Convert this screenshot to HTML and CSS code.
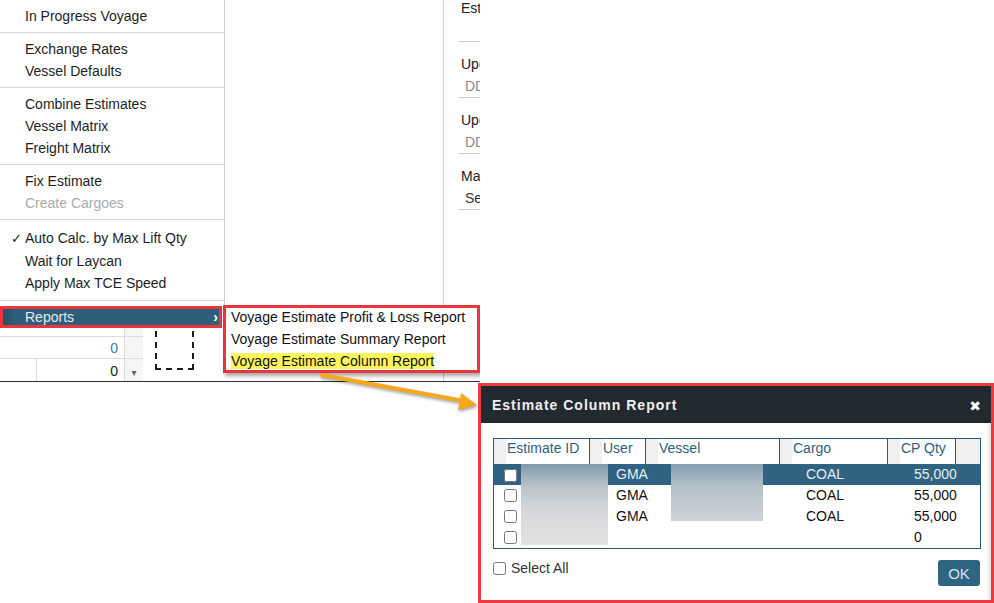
FILE: index.html
```html
<!DOCTYPE html>
<html>
<head>
<meta charset="utf-8">
<link rel="stylesheet" href="styles.css">
</head>
<body>
<div class="app">
  <div class="left-pane">
    <div class="bg-grid">
      <div class="bg-table">
        <div class="bg-row row-a"><div class="num-cell"><span class="num">0</span></div><div class="drop-cell"></div></div>
        <div class="bg-row row-b"><div class="num-cell"><span class="num blue">0</span></div><div class="drop-cell"></div></div>
        <div class="bg-row row-c"><div class="num-cell split"><div class="sub-a"></div><div class="sub-b"><span class="num">0</span></div></div><div class="drop-cell"><span class="caret">&#9662;</span></div></div>
      </div>
      <div class="dash"></div>
    </div>
  </div>
  <div class="form-pane">
    <div class="field"><div class="flabel">Estimate Name</div><div class="fvalue"></div></div>
    <div class="field"><div class="flabel">Updated Date</div><div class="fvalue muted">DDMMMYY</div></div>
    <div class="field"><div class="flabel">Updated GMT</div><div class="fvalue muted">DDMMMYY</div></div>
    <div class="field"><div class="flabel">Manager</div><div class="fvalue">Select</div></div>
  </div>

  <div class="menu">
    <div class="menu-group">
      <div class="mi">In Progress Voyage</div>
    </div>
    <div class="menu-group">
      <div class="mi">Exchange Rates</div>
      <div class="mi">Vessel Defaults</div>
    </div>
    <div class="menu-group">
      <div class="mi">Combine Estimates</div>
      <div class="mi">Vessel Matrix</div>
      <div class="mi">Freight Matrix</div>
    </div>
    <div class="menu-group">
      <div class="mi">Fix Estimate</div>
      <div class="mi disabled">Create Cargoes</div>
    </div>
    <div class="menu-group tall">
      <div class="mi"><span class="check">&#10003;</span>Auto Calc. by Max Lift Qty</div>
      <div class="mi">Wait for Laycan</div>
      <div class="mi">Apply Max TCE Speed</div>
    </div>
    <div class="mi-reports"><span>Reports</span><span class="chev">&#8250;</span></div>
  </div>

  <div class="submenu">
    <div class="smi">Voyage Estimate Profit &amp; Loss Report</div>
    <div class="smi">Voyage Estimate Summary Report</div>
    <div class="smi last"><span class="hl">Voyage Estimate Column Report</span></div>
  </div>
</div>

<div class="modal">
  <div class="m-head">
    <span class="m-title">Estimate Column Report</span>
    <span class="m-close">&#10006;</span>
  </div>
  <div class="m-body">
    <div class="tbl">
      <div class="thead">
        <div class="th"><span class="strip"></span>Estimate ID</div>
        <div class="th"><span class="strip"></span>User</div>
        <div class="th"><span class="strip"></span>Vessel</div>
        <div class="th"><span class="strip"></span>Cargo</div>
        <div class="th"><span class="strip"></span>CP Qty</div>
        <div class="th filler"></div>
      </div>
      <div class="tbody">
        <div class="tr sel"><div class="td cb"><input type="checkbox"></div><div class="td">GMA</div><div class="td"></div><div class="td">COAL</div><div class="td">55,000</div><div class="td"></div></div>
        <div class="tr"><div class="td cb"><input type="checkbox"></div><div class="td">GMA</div><div class="td"></div><div class="td">COAL</div><div class="td">55,000</div><div class="td"></div></div>
        <div class="tr"><div class="td cb"><input type="checkbox"></div><div class="td">GMA</div><div class="td"></div><div class="td">COAL</div><div class="td">55,000</div><div class="td"></div></div>
        <div class="tr"><div class="td cb"><input type="checkbox"></div><div class="td"></div><div class="td"></div><div class="td"></div><div class="td">0</div><div class="td"></div></div>
        <div class="blur b1"></div>
        <div class="blur b2"></div>
      </div>
    </div>
    <div class="m-foot">
      <label class="sel-all"><input type="checkbox">Select All</label>
      <button class="ok">OK</button>
    </div>
  </div>
</div>

<svg class="arrow" width="994" height="603" viewBox="0 0 994 603">
  <line x1="322" y1="375" x2="464" y2="401" stroke="#f5a81c" stroke-width="4" stroke-linecap="round"/>
  <polygon points="477,405 461,393 458,410" fill="#f5a81c"/>
</svg>
</body>
</html>
```

FILE: styles.css
```css
html, body {
  margin: 0;
  padding: 0;
}
body {
  width: 994px;
  height: 603px;
  position: relative;
  overflow: hidden;
  background: #fff;
  font-family: "Liberation Sans", Arial, sans-serif;
  font-size: 14px;
  color: #222;
}

.app {
  position: relative;
  width: 480px;
  height: 381px;
  border-bottom: 1px solid #2e2e2e;
  overflow: hidden;
  display: flex;
}

.left-pane {
  width: 443px;
  flex: none;
  display: flex;
  flex-direction: column;
  justify-content: flex-end;
}

.bg-grid {
  display: flex;
  height: 71px;
}
.bg-table {
  width: 143px;
  display: flex;
  flex-direction: column;
}
.bg-row {
  display: flex;
}
.row-a { height: 26px; border-bottom: 1px solid #dcdcdc; }
.row-b { height: 21px; border-bottom: 1px solid #dcdcdc; }
.row-c { height: 22px; }
.num-cell {
  width: 125px;
  box-sizing: border-box;
  padding-right: 6px;
  display: flex;
  align-items: center;
  justify-content: flex-end;
  border-right: 1px solid #dcdcdc;
}
.row-a .num-cell { align-items: flex-end; padding-bottom: 8px; }
.num-cell.split { padding-right: 0; }
.sub-a {
  width: 36px;
  height: 100%;
  border-right: 1px solid #dcdcdc;
}
.sub-b {
  flex: 1;
  display: flex;
  justify-content: flex-end;
  align-items: center;
  padding-right: 6px;
  padding-top: 2px;
}
.num { color: #222; }
.row-a .num { color: #3b7db4; line-height: 12px; }
.num.blue { color: #3b7db4; }
.drop-cell {
  width: 18px;
  background: #f5f5f5;
  display: flex;
  align-items: center;
  justify-content: center;
}
.caret {
  color: #666;
  font-size: 10px;
  font-family: "DejaVu Sans", sans-serif;
  padding-top: 4px;
}
.dash {
  margin-left: 12px;
  margin-top: 10px;
  width: 39px;
  height: 50px;
  box-sizing: border-box;
  border: 2px dashed #1c1c1c;
}

.form-pane {
  flex: 1;
  border-left: 1px solid #d2d2d2;
  overflow: hidden;
  white-space: nowrap;
  margin-top: -14px;
  padding-top: 0;
}
.field {
  margin-left: 15px;
  padding-top: 11px;
  border-bottom: 1px solid #cfcfcf;
  height: 44px;
}
.flabel {
  line-height: 22px;
  padding-left: 2px;
  color: #222;
}
.fvalue {
  line-height: 22px;
  padding-left: 6px;
  color: #333;
}
.fvalue.muted { color: #8a8a8a; }

/* dropdown menu overlay */
.menu {
  position: absolute;
  left: 0;
  top: 0;
  width: 225px;
  box-sizing: border-box;
  background: #fff;
  border-right: 1px solid #cfcfcf;
  padding-top: 5px;
}
.menu-group {
  padding-bottom: 5px;
  margin-bottom: 5px;
  border-bottom: 1px solid #d4d4d4;
}
.mi {
  line-height: 22px;
  height: 22px;
  padding-left: 25px;
  color: #1e1e1e;
  white-space: nowrap;
}
.menu-group.tall { padding-top: 2px; }
.menu-group.tall .mi { line-height: 22.5px; height: 22.5px; }
.mi.disabled { color: #ababab; }
.check {
  display: inline-block;
  width: 14px;
  margin-left: -14px;
  font-family: "DejaVu Sans", sans-serif;
  font-size: 13px;
}
.mi-reports {
  width: 222px;
  height: 22px;
  box-sizing: border-box;
  border: 3px solid #e9353b;
  background: linear-gradient(90deg, #244f67 0, #2e5f7a 12px, #2e5f7a 100%);
  color: #e4eaee;
  line-height: 16px;
  padding-left: 22px;
  padding-right: 1px;
  display: flex;
  justify-content: space-between;
}
.chev {
  color: #fff;
  font-weight: bold;
}

.submenu {
  position: absolute;
  left: 223px;
  top: 305px;
  width: 257px;
  box-sizing: border-box;
  border: 3px solid #e9353b;
  background: #fff;
  box-shadow: 2px 3px 4px rgba(0,0,0,0.35);
}
.smi {
  line-height: 18px;
  height: 18px;
  padding-bottom: 4px;
  padding-left: 5px;
  color: #111;
  white-space: nowrap;
}
.smi.last { padding-bottom: 0; }
.hl { background: #fdf55c; }

/* modal */
.modal {
  position: absolute;
  left: 478px;
  top: 383px;
  width: 516px;
  height: 220px;
  box-sizing: border-box;
  border: 3px solid #ee3b40;
  background: #fff;
  display: flex;
  flex-direction: column;
}
.m-head {
  height: 37px;
  flex: none;
  background: #22292f;
  display: flex;
  align-items: center;
  justify-content: space-between;
  padding: 0 10px 0 11px;
}
.m-title {
  color: #eef0f2;
  font-weight: bold;
  font-size: 14px;
  letter-spacing: 1px;
}
.m-close {
  color: #fff;
  font-size: 14px;
  font-family: "DejaVu Sans", sans-serif;
  padding-top: 3px;
}
.m-body {
  flex: 1;
  padding: 15px 10px 0 12px;
  box-shadow: inset -3px 0 3px -1px rgba(0,0,0,0.12);
}
.tbl {
  width: 488px;
  box-sizing: border-box;
  border: 1px solid #2c5a73;
}
.thead {
  display: grid;
  grid-template-columns: 96px 56px 134px 108px 68px 1fr;
  height: 25px;
}
.th {
  border-right: 1px solid #2c5a73;
  color: #2f5f7c;
  display: flex;
  align-items: flex-start;
  line-height: 18px;
  white-space: nowrap;
}
.th .strip {
  width: 12px;
  height: 100%;
  background: #efefef;
  margin-right: 1px;
  flex: none;
}
.th.filler {
  border-right: none;
  background: #efefef;
}
.tbody {
  position: relative;
}
.tr {
  display: grid;
  grid-template-columns: 96px 56px 134px 108px 68px 1fr;
  height: 21px;
  color: #111;
}
.tr.sel {
  background: #2f6381;
  color: #e8eef2;
}
.td {
  padding-left: 26px;
  line-height: 21px;
  white-space: nowrap;
}
.td.cb {
  padding-left: 10px;
  display: flex;
  align-items: center;
}
.td.cb input, .sel-all input {
  margin: 0;
  width: 13px;
  height: 13px;
}
.tr.sel .td.cb input { margin-top: 2px; }
.blur {
  position: absolute;
  top: 0;
}
.b1 {
  left: 27px;
  width: 87px;
  height: 81px;
  background: linear-gradient(180deg, #7f99aa 0%, #b4c0c8 25%, #d4d7da 55%, #e2e2e2 100%);
}
.b2 {
  left: 177px;
  width: 92px;
  height: 57px;
  background: linear-gradient(180deg, #86a0b1 0%, #b3c0c8 40%, #d0d4d7 100%);
}
.m-foot {
  margin-top: 10px;
  width: 488px;
  display: flex;
  justify-content: space-between;
  align-items: flex-start;
}
.sel-all {
  display: flex;
  align-items: center;
  gap: 5px;
  color: #333;
  line-height: 16px;
  padding-top: 1px;
}
.ok {
  width: 42px;
  height: 26px;
  margin-top: 1px;
  margin-right: 1px;
  border: none;
  border-radius: 3px;
  background: #2f6482;
  color: #d9e2e8;
  font-family: "Liberation Sans", Arial, sans-serif;
  font-size: 15px;
  padding: 0;
}

.arrow {
  position: absolute;
  left: 0;
  top: 0;
  pointer-events: none;
  filter: drop-shadow(1px 2px 1.5px rgba(0,0,0,0.35));
}
```
